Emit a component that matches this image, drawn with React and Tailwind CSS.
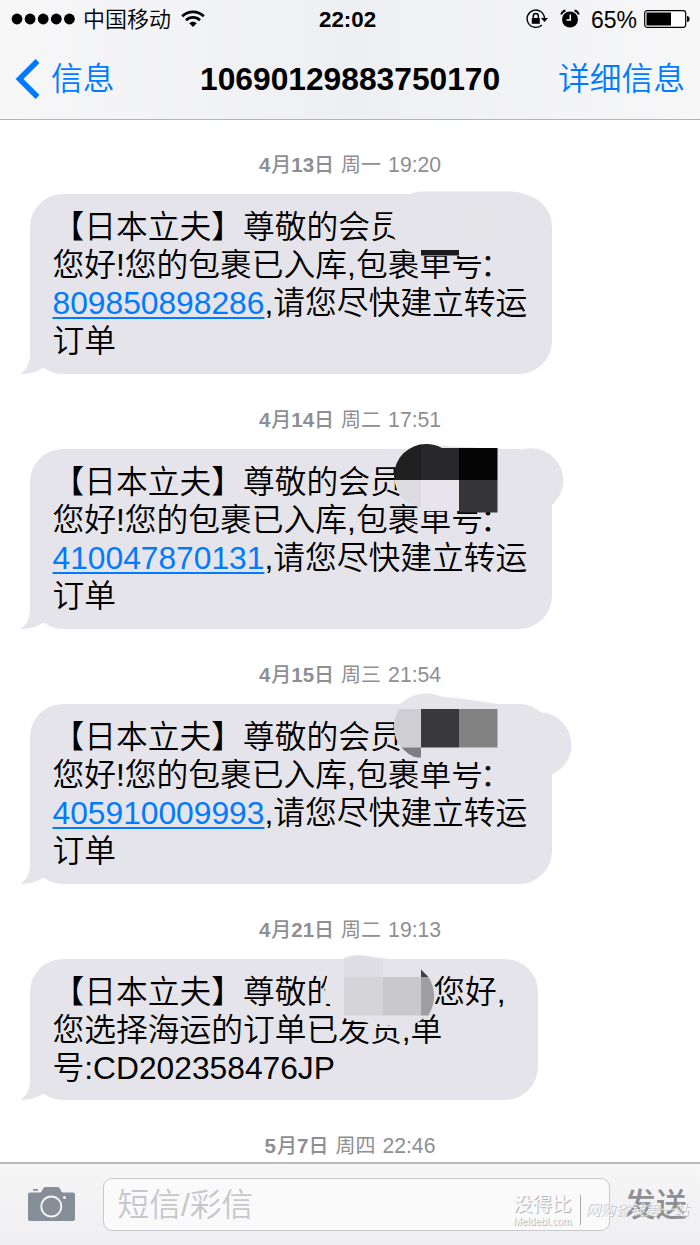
const LATIN_CJK = "font-['Liberation_Sans','Noto_Sans_CJK_SC',sans-serif]";

const messages = [
  {
    id: 1,
    day: ["4", "13"],
    weekday: "周一",
    time: "19:20",
    tracking: "809850898286",
    Cover: CoverOne,
  },
  {
    id: 2,
    day: ["4", "14"],
    weekday: "周二",
    time: "17:51",
    tracking: "410047870131",
    Cover: CoverTwo,
  },
  {
    id: 3,
    day: ["4", "15"],
    weekday: "周三",
    time: "21:54",
    tracking: "405910009993",
    Cover: CoverThree,
  },
];

// censor strokes, drawn in the coordinates of the bubble they cover
function Cover({ children }) {
  return (
    <svg
      className="absolute left-0 top-0 overflow-visible"
      width="522"
      height="180"
      viewBox="0 0 522 180"
      fill="none"
    >
      {children}
    </svg>
  );
}

function CoverOne() {
  return (
    <Cover>
      <path d="M392 29L482 29" stroke="#e5e4ea" strokeWidth="63" strokeLinecap="round" />
      <path d="M391 20H466V62H391z" fill="#e5e4ea" />
      <path d="M429 16h39v40h-39z" fill="#e4e3e8" />
      <path d="M391 56h38v5.5h-38z" fill="#1b1b1d" />
    </Cover>
  );
}

function CoverTwo() {
  return (
    <Cover>
      <clipPath id="blob2">
        <path d="M396 -5A32 32 0 0 0 396 59H470V-1H412A32 32 0 0 0 396 -5z" />
      </clipPath>
      <circle cx="501" cy="31.5" r="32.3" fill="#e5e4ea" />
      <path d="M396 27L470 31" stroke="#e5e4ea" strokeWidth="62" strokeLinecap="round" />
      <path d="M391 30H468V62H391z" fill="#e5e4ea" />
      <g clipPath="url(#blob2)">
        <path d="M360 -6h31v37h-31z" fill="#202021" />
        <path d="M391 -6h38v37h-38z" fill="#28282a" />
        <path d="M360 31h31v30h-31z" fill="#dcdbe0" />
        <path d="M391 31h38v30h-38z" fill="#e7e4ec" />
      </g>
      <path d="M429 -1h38.5v32h-38.5z" fill="#050505" />
      <path d="M429 31h38.5v32.5h-38.5z" fill="#363638" />
    </Cover>
  );
}

function CoverThree() {
  return (
    <Cover>
      <clipPath id="blob3">
        <circle cx="397" cy="22.5" r="33" />
      </clipPath>
      <path
        d="M368 2C376 -6 386 -10.5 396 -10.5C402 -10.5 406 -9 411 -7.5C430 -6 450 -3 467 0H488C498 0 504 4 511 8.5C528 9 541.5 24 541.5 41C541.5 54 534 65 521 71L480 58H391V40z"
        fill="#e5e4ea"
      />
      <circle cx="397" cy="22.5" r="33" fill="#e5e4ea" />
      <path d="M429 30H468V58H429z" fill="#e5e4ea" />
      <g clipPath="url(#blob3)">
        <path d="M360 5h31v38.5h-31z" fill="#cfced2" />
        <path d="M360 43.5h31v10h-31z" fill="#7e7d81" />
      </g>
      <path d="M391 5h38v38.5h-38z" fill="#39393b" />
      <path d="M429 5h38.5v38.5h-38.5z" fill="#828283" />
    </Cover>
  );
}

function CoverFour() {
  return (
    <Cover>
      <path d="M328 29L371 35" stroke="#e5e4ea" strokeWidth="66" strokeLinecap="round" />
      <path d="M314 0A33 33 0 0 1 343 0H353V18H314z" fill="#dfdee4" />
      <path d="M314 18h39v38.5h-39z" fill="#d5d4d9" />
      <path d="M353 18h38v38.5h-38z" fill="#c9c8cb" />
      <path d="M391 18h7.5C406 31 406 43 398.5 56.5H391z" fill="#9f9ea3" />
      <path d="M391 10.5L398.5 18H391z" fill="#404042" />
    </Cover>
  );
}

function Stamp({ day, weekday, time }) {
  return (
    <div className="flex h-[30px] items-center justify-center whitespace-pre text-[21.2px] leading-[30px] text-[#8e8e93]">
      <span className="text-[20.5px] font-bold">{day[0]}</span>
      <span className="ml-px text-[20px] font-medium">月</span>
      <span className="text-[20.5px] font-bold">{day[1]}</span>
      <span className="text-[20px] font-medium">日</span>
      <span className="mx-[7px] text-[20px]">{weekday}</span>
      <span>{time}</span>
    </div>
  );
}

function Bubble({ className, children }) {
  return (
    <div
      className={`relative ml-[30px] rounded-[33px] bg-[#e5e4ea] pl-[22.5px] pt-[13.5px] text-[31.75px] font-[350] leading-[38.1px] text-black ${className}`}
    >
      <svg
        className="absolute -left-[10px] bottom-0"
        width="50"
        height="40"
        viewBox="0 0 50 40"
        fill="#e5e4ea"
      >
        <path d="M10 0V20C10 29 7 36 0 39.8C9 40 17 38 22.5 34L42 30V0z" />
      </svg>
      <div className="relative whitespace-nowrap">{children}</div>
    </div>
  );
}

function StatusBar() {
  return (
    <div className="relative flex h-[38px] items-center text-black">
      <svg className="ml-[11px]" width="65" height="12" viewBox="0 0 65 12">
        <circle cx="6" cy="6" r="5.4" />
        <circle cx="19.1" cy="6" r="5.4" />
        <circle cx="32.2" cy="6" r="5.4" />
        <circle cx="45.3" cy="6" r="5.4" />
        <circle cx="58.4" cy="6" r="5.4" />
      </svg>
      <span className="ml-[7px] mt-[2px] w-[88px] whitespace-nowrap text-[22px] font-[350] leading-[38px]">中国移动</span>
      <svg className="ml-[10px] mt-[-1px]" width="24" height="18" viewBox="0 0 24 18" fill="none" stroke="#000" strokeWidth="2.7">
        <path d="M1.2 6.3C7.3 0.5 16.7 0.5 22.8 6.3" />
        <path d="M5 10.3C9 6.5 15 6.5 19 10.3" />
        <path d="M8.2 13.3C10.3 11.2 13.7 11.2 15.8 13.3L12 17z" fill="#000" stroke="none" />
      </svg>
      <span className="ml-[114px] mt-[2px] text-[22.3px] font-bold leading-[38px]">22:02</span>
      <div className="ml-auto mr-[10px] flex items-center">
        <svg className="mr-[12px]" width="22" height="20" viewBox="0 0 22 20" fill="none">
          <path d="M18.5 9.5A8.7 8.7 0 1 0 15.8 16" stroke="#000" strokeWidth="1.4" />
          <path d="M15 9h7l-3.5 4z" fill="#000" />
          <path d="M5.8 9h8v5.8h-8z" fill="#000" />
          <path d="M7.3 9.5V7A2.5 2.5 0 0 1 12.3 7V9.5" stroke="#000" strokeWidth="1.5" />
        </svg>
        <svg className="mr-[11px]" width="20" height="20" viewBox="0 0 20 20" fill="none">
          <circle cx="10" cy="10.5" r="8" fill="#000" />
          <path d="M1.2 5.5C1.8 3.5 3.3 2 5.5 1.5M18.8 5.5C18.2 3.5 16.7 2 14.5 1.5" stroke="#000" strokeWidth="1.9" />
          <path d="M10.3 5.5V11H6.5" stroke="#fff" strokeWidth="1.5" />
        </svg>
        <span className="mr-[7px] mt-[2px] text-[23px] leading-[38px]">65%</span>
        <svg width="46" height="18" viewBox="0 0 46 18" fill="none">
          <rect x="0.7" y="0.7" width="41" height="16.6" rx="2.5" fill="#fff" stroke="#000" strokeWidth="1.2" />
          <path d="M2.5 2.5H27V15.5H2.5z" fill="#000" />
          <path d="M43 6C46.5 6 46.5 12 43 12z" fill="#000" />
        </svg>
      </div>
    </div>
  );
}

function NavBar() {
  return (
    <div className="grid h-[81px] grid-cols-[200px_300px_200px] items-center text-[31.75px] leading-[38px]">
      <div className="flex items-center font-[350] text-[#007aff]">
        <svg className="ml-[14px] mr-[12px]" width="25" height="40" viewBox="0 0 25 40" fill="none">
          <path d="M23.5 2L5.5 20L23.5 38" stroke="#007aff" strokeWidth="5.5" />
        </svg>
        <span className="mt-px">信息</span>
      </div>
      <h1 className="whitespace-nowrap text-center font-bold text-black">10690129883750170</h1>
      <span className="mr-[15px] mt-px text-right font-[350] text-[#007aff]">详细信息</span>
    </div>
  );
}

function InputBar() {
  return (
    <footer className="relative flex h-[83px] shrink-0 items-center border-t-2 border-[#b9bbbc] bg-linear-to-b from-[#f6f6f7] to-[#efeff1]">
      <svg className="-mt-[2px] ml-[28px]" width="47" height="36" viewBox="0 0 47 36">
        <path
          d="M2 6.5H12C14.5 6.5 14 1 18 1H29C33 1 32.5 6.5 35 6.5H45Q47 6.5 47 8.5V33Q47 35 45 35H2Q0 35 0 33V8.5Q0 6.5 2 6.5zM5 3h5v1.8H5z"
          fill="#868e99"
        />
        <circle cx="23.3" cy="20.5" r="10" fill="none" stroke="#f6f6f7" strokeWidth="1.8" />
        <circle cx="36.5" cy="11.5" r="1.5" fill="#f6f6f7" />
      </svg>
      <div className="ml-[27.5px] flex h-[53px] w-[507px] items-center rounded-[9px] border border-[#c8c8cd] bg-[#fafafb] pl-[14px] text-[31.75px] font-[350] leading-[38px] text-[#c7c7cc]">
        短信/彩信
      </div>
      <span className="ml-[15px] mt-[2px] whitespace-nowrap text-[31.3px] font-medium leading-[38px] text-[#8e8e93]">发送</span>
      {/* site watermark over the bar */}
      <div className="absolute left-[513px] top-[28px] flex items-center whitespace-nowrap text-[#f8f8f9] [text-shadow:1px_1px_0_#b4b4b7]">
        <div className="w-[67px]">
          <div className="text-[19.5px] leading-[24px]">没得比</div>
          <div className="text-[10.3px] leading-[12px]">Meldebl.com</div>
        </div>
        <div className="h-[30px] w-px bg-[#aaaaad]" />
        <div className="ml-[4px] text-[14.8px] font-light italic leading-[20px]">网购省钱第一站</div>
      </div>
    </footer>
  );
}

export default function App() {
  return (
    <div className={`flex h-[1245px] w-[700px] flex-col overflow-hidden bg-white ${LATIN_CJK}`} lang="zh-CN">
      <header className="h-[120px] shrink-0 border-b-[1.5px] border-[#b4b4b7] bg-linear-to-r from-[#f7f7f8] via-[#eeeff2] to-[#f7f7f8]">
        <StatusBar />
        <NavBar />
      </header>

      <main className="flex-1 overflow-hidden pt-[30px]">
        {messages.map(({ id, day, weekday, time, tracking, Cover: Mask }) => (
          <section key={id} className="h-[255px]">
            <Stamp day={day} weekday={weekday} time={time} />
            <Bubble className="mt-[14px] h-[180px] w-[521.5px]">
              <p>【日本立夫】尊敬的会员</p>
              <p>
                您好!您的包裹已入库,包裹单号
                <span className="-ml-[3px]">：</span>
              </p>
              <p>
                <a className="text-[#007aff] underline decoration-2 underline-offset-[3px]">{tracking}</a>
                ,请您尽快建立转运
              </p>
              <p>订单</p>
              <div className="absolute -left-[22.5px] -top-[13.5px]">
                <Mask />
              </div>
            </Bubble>
          </section>
        ))}
        <section className="h-[216px]">
          <Stamp day={["4", "21"]} weekday="周二" time="19:13" />
          <Bubble className="mt-[14px] h-[141px] w-[507.5px]">
            <p>
              【日本立夫】尊敬的
              <span className="inline-block w-[95px]" />
              您好,
            </p>
            <p>您选择海运的订单已发货,单</p>
            <p>号:CD202358476JP</p>
            <div className="absolute -left-[22.5px] -top-[13.5px]">
              <CoverFour />
            </div>
          </Bubble>
        </section>
        <Stamp day={["5", "7"]} weekday="周四" time="22:46" />
      </main>

      <InputBar />
    </div>
  );
}
